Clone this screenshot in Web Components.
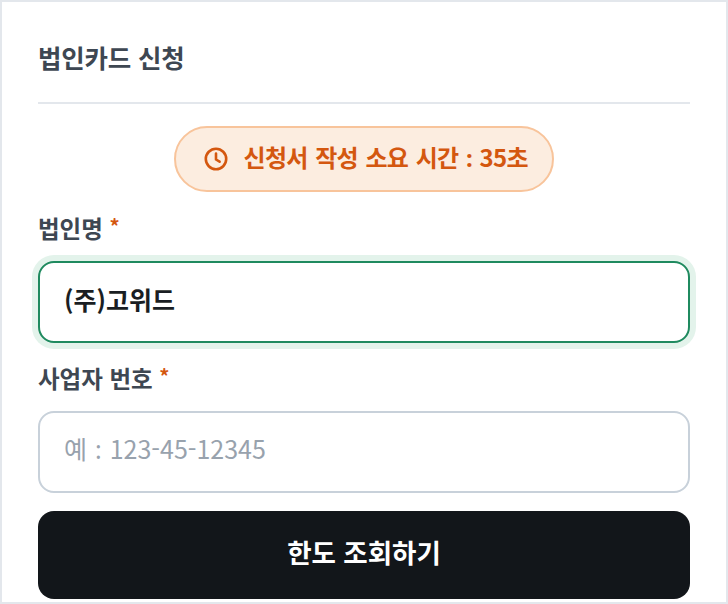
<!DOCTYPE html>
<html lang="ko"><head><meta charset="utf-8"><style>
html,body{margin:0;padding:0;background:#fff}
body{font-family:"Noto Sans CJK KR","Noto Sans",sans-serif}
.c{font-family:"Noto Sans",sans-serif}
</style></head><body>
<card-form-page>
<form-title>법인카드 신청</form-title>
<time-pill>신청서 작성 소요 시간 <span class="c">:</span> 35초</time-pill>
<form-field label="법인명" value="(주)고위드" focused></form-field>
<form-field label="사업자 번호" placeholder="예 : 123-45-12345"></form-field>
<primary-button>한도 조회하기</primary-button>
</card-form-page>
<script>
function def(name,html,setup){customElements.define(name,class extends HTMLElement{connectedCallback(){if(this.shadowRoot)return;const r=this.attachShadow({mode:"open"});r.innerHTML=html;if(setup)setup(this,r);}});}
def("card-form-page",`<style>:host{display:flex;flex-direction:column;box-sizing:border-box;width:728px;height:604px;overflow:hidden;padding:0 36px;border:2px solid #e3e7ec;background:#fff}</style><slot></slot>`);
def("form-title",`<style>:host{display:flex;align-items:center;box-sizing:border-box;height:102px;padding-top:9px;border-bottom:2px solid #e3e7ec;font-size:25.5px;font-weight:700;letter-spacing:-.2px;color:#3e4752;flex:none}</style><slot></slot>`);
def("time-pill",`<style>:host{display:flex;align-self:center;align-items:center;gap:15.5px;box-sizing:border-box;width:380px;height:66px;margin:22px 0 1px;padding:0 0 5px 28px;border:2px solid #f8c49b;border-radius:33px;background:#fcede0;color:#d4570f;font-size:24px;font-weight:700;flex:none;white-space:nowrap}.t{letter-spacing:-.7px;word-spacing:1.5px}svg{display:block;flex:none;position:relative;top:2.5px}</style><svg width="24" height="24" viewBox="0 0 24 24" fill="none" stroke="#d4570f" stroke-width="2.6" stroke-linecap="round" stroke-linejoin="round"><circle cx="12" cy="12" r="10.2"/><path d="M12 6.5v6l3.6 2.2"/></svg><div class="t"><slot></slot></div>`);
def("form-field",`<style>:host{display:block;flex:none}.c{font-family:"Noto Sans",sans-serif}.l{display:flex;align-items:center;gap:6.5px;height:34px;margin-top:20px;font-size:23.5px;font-weight:700;color:#3e4752;line-height:34px}.l span{position:relative;top:-2px}.l b{color:#d4570f;font-weight:700;font-size:20px;position:relative;top:-4px}.i{box-sizing:border-box;height:82px;margin-top:14px;display:flex;align-items:center;padding:0 24px 7px;border:2px solid #c8d1da;border-radius:16px;font-size:25px;background:#fff;white-space:pre}.i.f{border-color:#1f8a5f;box-shadow:0 0 0 6px #e3f3eb;font-weight:700;color:#1a1e23}.i.p{color:#98a2ad;font-weight:400;padding-bottom:9px;word-spacing:1px}</style><div class="l"><span id="t"></span><b>*</b></div><div class="i" id="i"></div>`,(h,r)=>{r.getElementById("t").textContent=h.getAttribute("label");const i=r.getElementById("i");if(h.hasAttribute("value")){i.textContent=h.getAttribute("value");i.classList.add("f")}else{i.innerHTML='<div>'+h.getAttribute("placeholder").replace(":",'<span class="c">:</span>')+'</div>';i.classList.add("p")}});
def("primary-button",`<style>:host{display:flex;align-items:center;justify-content:center;box-sizing:border-box;height:88px;margin-top:18px;padding-bottom:8px;border-radius:16px;background:#12161a;color:#fff;font-size:26.5px;font-weight:700;flex:none}</style><slot></slot>`);
</script>
</body></html>
